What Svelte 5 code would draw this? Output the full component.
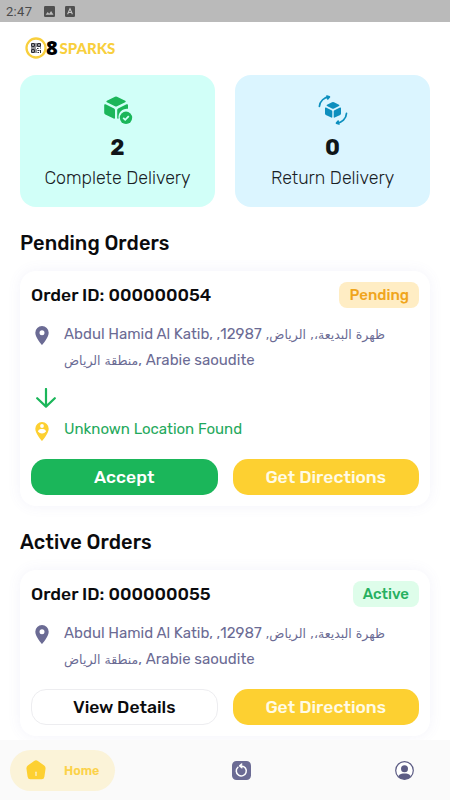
<script lang="ts">
  interface Stat {
    kind: 'complete' | 'return';
    count: number;
    label: string;
  }

  interface Order {
    id: string;
    status: 'Pending' | 'Active';
    street: string;
    district: string;
    postcode: string;
    region: string;
    country: string;
    dropoff?: string;
    action: string;
  }

  const stats: Stat[] = [
    { kind: 'complete', count: 2, label: 'Complete Delivery' },
    { kind: 'return', count: 0, label: 'Return Delivery' },
  ];

  const address = {
    street: 'Abdul Hamid Al Katib,',
    district: 'ظهرة البديعة،, الرياض,',
    postcode: '12987,',
    region: 'منطقة الرياض',
    country: ', Arabie saoudite',
  };

  const sections: { title: string; orders: Order[] }[] = [
    {
      title: 'Pending Orders',
      orders: [
        {
          id: '000000054',
          status: 'Pending',
          ...address,
          dropoff: 'Unknown Location Found',
          action: 'Accept',
        },
      ],
    },
    {
      title: 'Active Orders',
      orders: [{ id: '000000055', status: 'Active', ...address, action: 'View Details' }],
    },
  ];
</script>

<div class="app">
  <div class="statusbar">
    <span class="clock">2:47</span>
    <svg width="11" height="11" viewBox="0 0 11 11">
      <rect width="11" height="11" rx="1.2" fill="#505050" />
      <path d="M1.6 8.8 3.7 6l1.5 1.7L7.1 5l2.4 3.8z" fill="#bdbdbd" />
    </svg>
    <svg class="lang" width="10" height="11" viewBox="0 0 10 11">
      <rect width="10" height="11" rx="1.2" fill="#505050" />
      <path d="M2.6 8.2 5 2.6l2.4 5.6M3.5 6.5h3" fill="none" stroke="#c8c8c8" stroke-width="1.1" />
    </svg>
  </div>

  <header class="brand">
    <svg width="22" height="22" viewBox="0 0 22 22">
      <circle cx="11" cy="11" r="9.5" fill="#fff" stroke="#f8cf3d" stroke-width="2.3" />
      <g fill="none" stroke="#2c2c34" stroke-width="1">
        <path d="M6.500 6.500h3v3h-3zM12.500 6.500h3v3h-3zM6.500 12.500h3v3h-3z" />
        <path d="M7 8h2M13 8h2M7 14h2M11 6v4M6 11h5M12 11.500h1.500M15 11h1M11 12v4M12.500 13.500h2M15.500 13v3M12.500 15.500h1.500" />
      </g>
    </svg>
    <span class="brand-num">8</span>
    <span class="brand-name">SPARKS</span>
  </header>

  <main>
    <div class="stats">
      {#each stats as stat}
        <div class="stat {stat.kind}">
          {#if stat.kind === 'complete'}
            <svg width="30" height="30" viewBox="0 0 30 30" fill="#1bb65a">
              <path d="M12 1.700q1-.5 2 0l8.200 4q1.300.7 0 1.500L14 11.200q-1 .5-2 0L3.900 7.200q-1.300-.8 0-1.500z" />
              <path d="M1.200 10.200q0-1.500 1.300-.9l8.600 4.200q.9.500.9 1.500v7.800q0 1.500-1.400.8l-8.300-4.100q-1.100-.6-1.100-1.700z" />
              <path d="M14.200 15q0-1 .9-1.500l8.400-4.200q1.500-.6 1.500.9v3.600a8.300 8.300 0 0 0-9.400 9.600q-1.400.7-1.400-.6z" />
              <circle cx="23" cy="22.800" r="6.200" />
              <path d="m20.200 22.900 2 1.900 3.600-3.600" fill="none" stroke="#d1fff8" stroke-width="1.800" />
            </svg>
          {:else}
            <svg width="30" height="30" viewBox="0 0 30 30" fill="#0d8fbe">
              <path d="M14 7.300q1-.5 2 0l5 2.500q1 .6 0 1.100l-5 2.600q-1 .5-2 0l-5-2.600q-1-.5 0-1.100z" />
              <path d="M7 13.200q0-1.100 1-.6l5.500 2.700q.8.400.8 1.300v5.400q0 1.100-1 .6l-5.500-2.700q-.8-.4-.8-1.300z" />
              <path d="M23 13.200q0-1.100-1-.6l-5.500 2.700q-.8.400-.8 1.300v5.400q0 1.100 1 .6l5.500-2.700q.8-.4.800-1.300z" />
              <g fill="none" stroke="#0d8fbe" stroke-width="1.700" stroke-linecap="round" stroke-linejoin="round">
                <path d="M1.400 11.400A10.400 10.400 0 0 1 11.400 1.900M8.900 1.100l2.500.8-1.700 2" />
                <path d="M28.500 18.400a10.400 10.400 0 0 1-9.900 9.800M21 28.900l-2.500-.8 1.700-2" />
              </g>
            </svg>
          {/if}
          <strong>{stat.count}</strong>
          <span>{stat.label}</span>
        </div>
      {/each}
    </div>

    {#each sections as section}
      <h2>{section.title}</h2>
      {#each section.orders as order}
        <article class="card">
          <div class="card-head">
            <h3>Order ID: {order.id}</h3>
            <span class="badge {order.status.toLowerCase()}">{order.status}</span>
          </div>

          <div class="row">
            <svg class="pin" width="14" height="19" viewBox="0 0 14 19">
              <path
                d="M7 0a6.700 6.700 0 0 0-6.700 6.700C.3 11.500 7 19 7 19s6.700-7.500 6.700-12.300A6.700 6.700 0 0 0 7 0zm0 4.300a2.500 2.500 0 1 1 0 5 2.500 2.500 0 0 1 0-5z"
                fill="#6b6b94"
              />
            </svg>
            <p class="address">{order.street} <span class="ar">{order.district}</span> {order.postcode} <span class="ar">{order.region}</span>{order.country}</p>
          </div>

          {#if order.dropoff}
            <svg class="arrow" width="20" height="20" viewBox="0 0 20 20">
              <path
                d="M10 1v17M1.200 10.200 10 18.600l8.800-8.400"
                fill="none"
                stroke="#1bb65a"
                stroke-width="2.200"
                stroke-linecap="round"
                stroke-linejoin="round"
              />
            </svg>
            <div class="row drop">
              <svg class="pin" width="14" height="19" viewBox="0 0 14 19">
                <path d="M7 0a6.700 6.700 0 0 0-6.700 6.700C.3 11.500 7 19 7 19s6.700-7.500 6.700-12.300A6.700 6.700 0 0 0 7 0z" fill="#fdd031" />
                <circle cx="7" cy="4" r="1.900" fill="#fff" />
                <path d="M3.200 9.200C3.200 7.400 5.300 7.100 7 7.100s3.800.3 3.800 2.100C10 10.700 8.700 11.400 7 11.400s-3-.7-3.800-2.200z" fill="#fff" />
              </svg>
              <span>{order.dropoff}</span>
            </div>
          {/if}

          <div class="actions">
            <button class={order.dropoff ? 'accept' : 'details'}>{order.action}</button>
            <button class="directions">Get Directions</button>
          </div>
        </article>
      {/each}
    {/each}
  </main>

  <nav>
    <div class="tab home">
      <svg width="20" height="20" viewBox="0 0 20 20">
        <path
          d="M8.100 1q1.900-1.400 3.800 0l6.300 4.600q1.700 1.300 1.300 3.300l-1.100 7.800q-.4 2.500-2.700 2.500H4.300q-2.300 0-2.700-2.500L.5 8.900Q.1 6.900 1.800 5.600z"
          fill="#fdd031"
        />
        <path d="M10 12.200v3.200" stroke="#fbf0cf" stroke-width="1.300" stroke-linecap="round" />
      </svg>
      <span>Home</span>
    </div>
    <div class="tab history">
      <svg width="19" height="19" viewBox="0 0 19 19">
        <rect width="19" height="19" rx="4.500" fill="#6b6b94" />
        <path
          d="M5.900 6.200A5 5 0 1 0 9.500 4.900H7.800M9.700 3 7.700 4.900l2.200 1.900"
          fill="none"
          stroke="#fff"
          stroke-width="1.500"
          stroke-linecap="round"
          stroke-linejoin="round"
        />
      </svg>
    </div>
    <div class="tab profile">
      <svg width="19" height="19" viewBox="0 0 19 19">
        <circle cx="9.500" cy="9.500" r="8.800" fill="#fff" stroke="#5c5c84" stroke-width="1.200" />
        <circle cx="9.500" cy="7.800" r="3.500" fill="#5c5c84" />
        <path d="M3.300 15.200c1.200-2.200 3.600-2.700 6.200-2.700s5 .5 6.200 2.700c-1.600 2-3.700 3-6.200 3s-4.600-1-6.200-3z" fill="#5c5c84" />
      </svg>
    </div>
  </nav>
</div>

<style>
  :global(body) {
    margin: 0;
    background: #fff;
  }
  .app {
    display: flex;
    flex-direction: column;
    width: 450px;
    height: 800px;
    overflow: hidden;
    background: #fff;
    color: #0b0b0d;
    font-family: Rubik, Roboto, 'DejaVu Sans', sans-serif;
  }
  svg {
    display: block;
    flex-shrink: 0;
  }

  .statusbar {
    display: flex;
    align-items: center;
    flex-shrink: 0;
    height: 22px;
    padding: 1px 0 0 6px;
    box-sizing: border-box;
    background: #bababa;
  }
  .clock {
    width: 38px;
    font-family: Roboto, sans-serif;
    font-size: 13px;
    letter-spacing: 0.3px;
    color: #4a4a4a;
  }
  .lang { margin-left: 10px; }

  .brand {
    display: flex;
    align-items: center;
    flex-shrink: 0;
    height: 53px;
    padding: 0 0 2px 25px;
    box-sizing: border-box;
  }
  .brand-num {
    width: 12.5px;
    margin: 1px 0 0 -1px;
    font-family: 'Open Sans', sans-serif;
    font-size: 20px;
    font-weight: 800;
    line-height: 20px;
    color: #000;
  }
  .brand-name {
    margin-left: 1px;
    font-family: Lato, sans-serif;
    font-size: 15px;
    font-weight: 900;
    color: #f8cf3d;
  }

  main {
    flex: 1;
    min-height: 0;
    padding: 0 20px;
    overflow: hidden;
  }
  .stats {
    display: flex;
    gap: 20px;
  }
  .stat {
    display: flex;
    flex: 1;
    flex-direction: column;
    align-items: center;
    height: 132px;
    padding-top: 20px;
    box-sizing: border-box;
    border-radius: 16px;
    white-space: nowrap;
  }
  .stat.complete { background: #d1fff8; }
  .stat.return { background: #dbf5ff; }
  .stat strong {
    margin-top: 9px;
    font-size: 22px;
    font-weight: 700;
    line-height: 28px;
    color: #101518;
  }
  .stat span {
    margin-top: 3px;
    font-size: 17.8px;
    font-weight: 350;
    line-height: 26px;
    color: #182024;
  }

  h2 {
    margin: 22px 0 14px;
    font-size: 20px;
    font-weight: 500;
    line-height: 28px;
    letter-spacing: 0.05px;
  }
  .card {
    padding: 11px;
    border-radius: 16px;
    background: #fff;
    box-shadow: 0 0 14px rgba(100, 100, 190, 0.08);
  }
  .card-head {
    display: flex;
    align-items: center;
    justify-content: space-between;
    height: 26px;
  }
  h3 {
    margin: 0;
    font-size: 17.5px;
    font-weight: 500;
    white-space: nowrap;
  }
  .badge {
    padding: 0 10px;
    border-radius: 8px;
    font-size: 15px;
    font-weight: 500;
    line-height: 26px;
  }
  .badge.pending { background: #ffedc4; color: #f0a51c; }
  .badge.active { background: #defdea; color: #27b060; }

  .row {
    display: flex;
    gap: 15px;
    margin-top: 14px;
    padding-left: 4px;
  }
  .pin { margin-top: 4px; }
  .address {
    flex: 1;
    height: 51px;
    margin: 0;
    font-size: 15px;
    font-weight: 370;
    line-height: 25.5px;
    color: #6b6b94;
  }
  .ar {
    font-family: 'DejaVu Sans', sans-serif;
    font-size: 12.5px;
    line-height: 1;
  }
  .arrow { margin: 15px 0 0 5px; }
  .drop {
    margin-top: 9px;
    font-size: 15px;
    font-weight: 370;
    line-height: 25px;
    color: #1fa95c;
  }
  .drop .pin { margin-top: 5px; }

  .actions {
    display: grid;
    grid-template-columns: 1fr 1fr;
    gap: 15px;
    margin-top: 17px;
  }
  button {
    height: 36px;
    padding: 0 0 1px;
    border: 0;
    border-radius: 15px;
    font: 500 17.5px Rubik, Roboto, sans-serif;
    color: #fff;
  }
  .accept { background: #1bb65a; }
  .directions { background: #fdd031; color: #fffbe6; }
  .details {
    border: 1px solid #ededf0;
    background: #fff;
    color: #0b0b0d;
  }

  nav {
    display: flex;
    align-items: center;
    flex-shrink: 0;
    height: 60px;
    padding: 0 36px 0 10px;
    box-sizing: border-box;
    background: #fafafa;
  }
  .home {
    display: flex;
    align-items: center;
    gap: 18px;
    width: 105px;
    height: 41px;
    padding-left: 16px;
    box-sizing: border-box;
    border-radius: 21px;
    background: #fbf3d8;
    font-size: 12.5px;
    font-weight: 600;
    color: #fbd24a;
  }
  .history { margin-left: 117px; }
  .profile { margin-left: auto; }
</style>
